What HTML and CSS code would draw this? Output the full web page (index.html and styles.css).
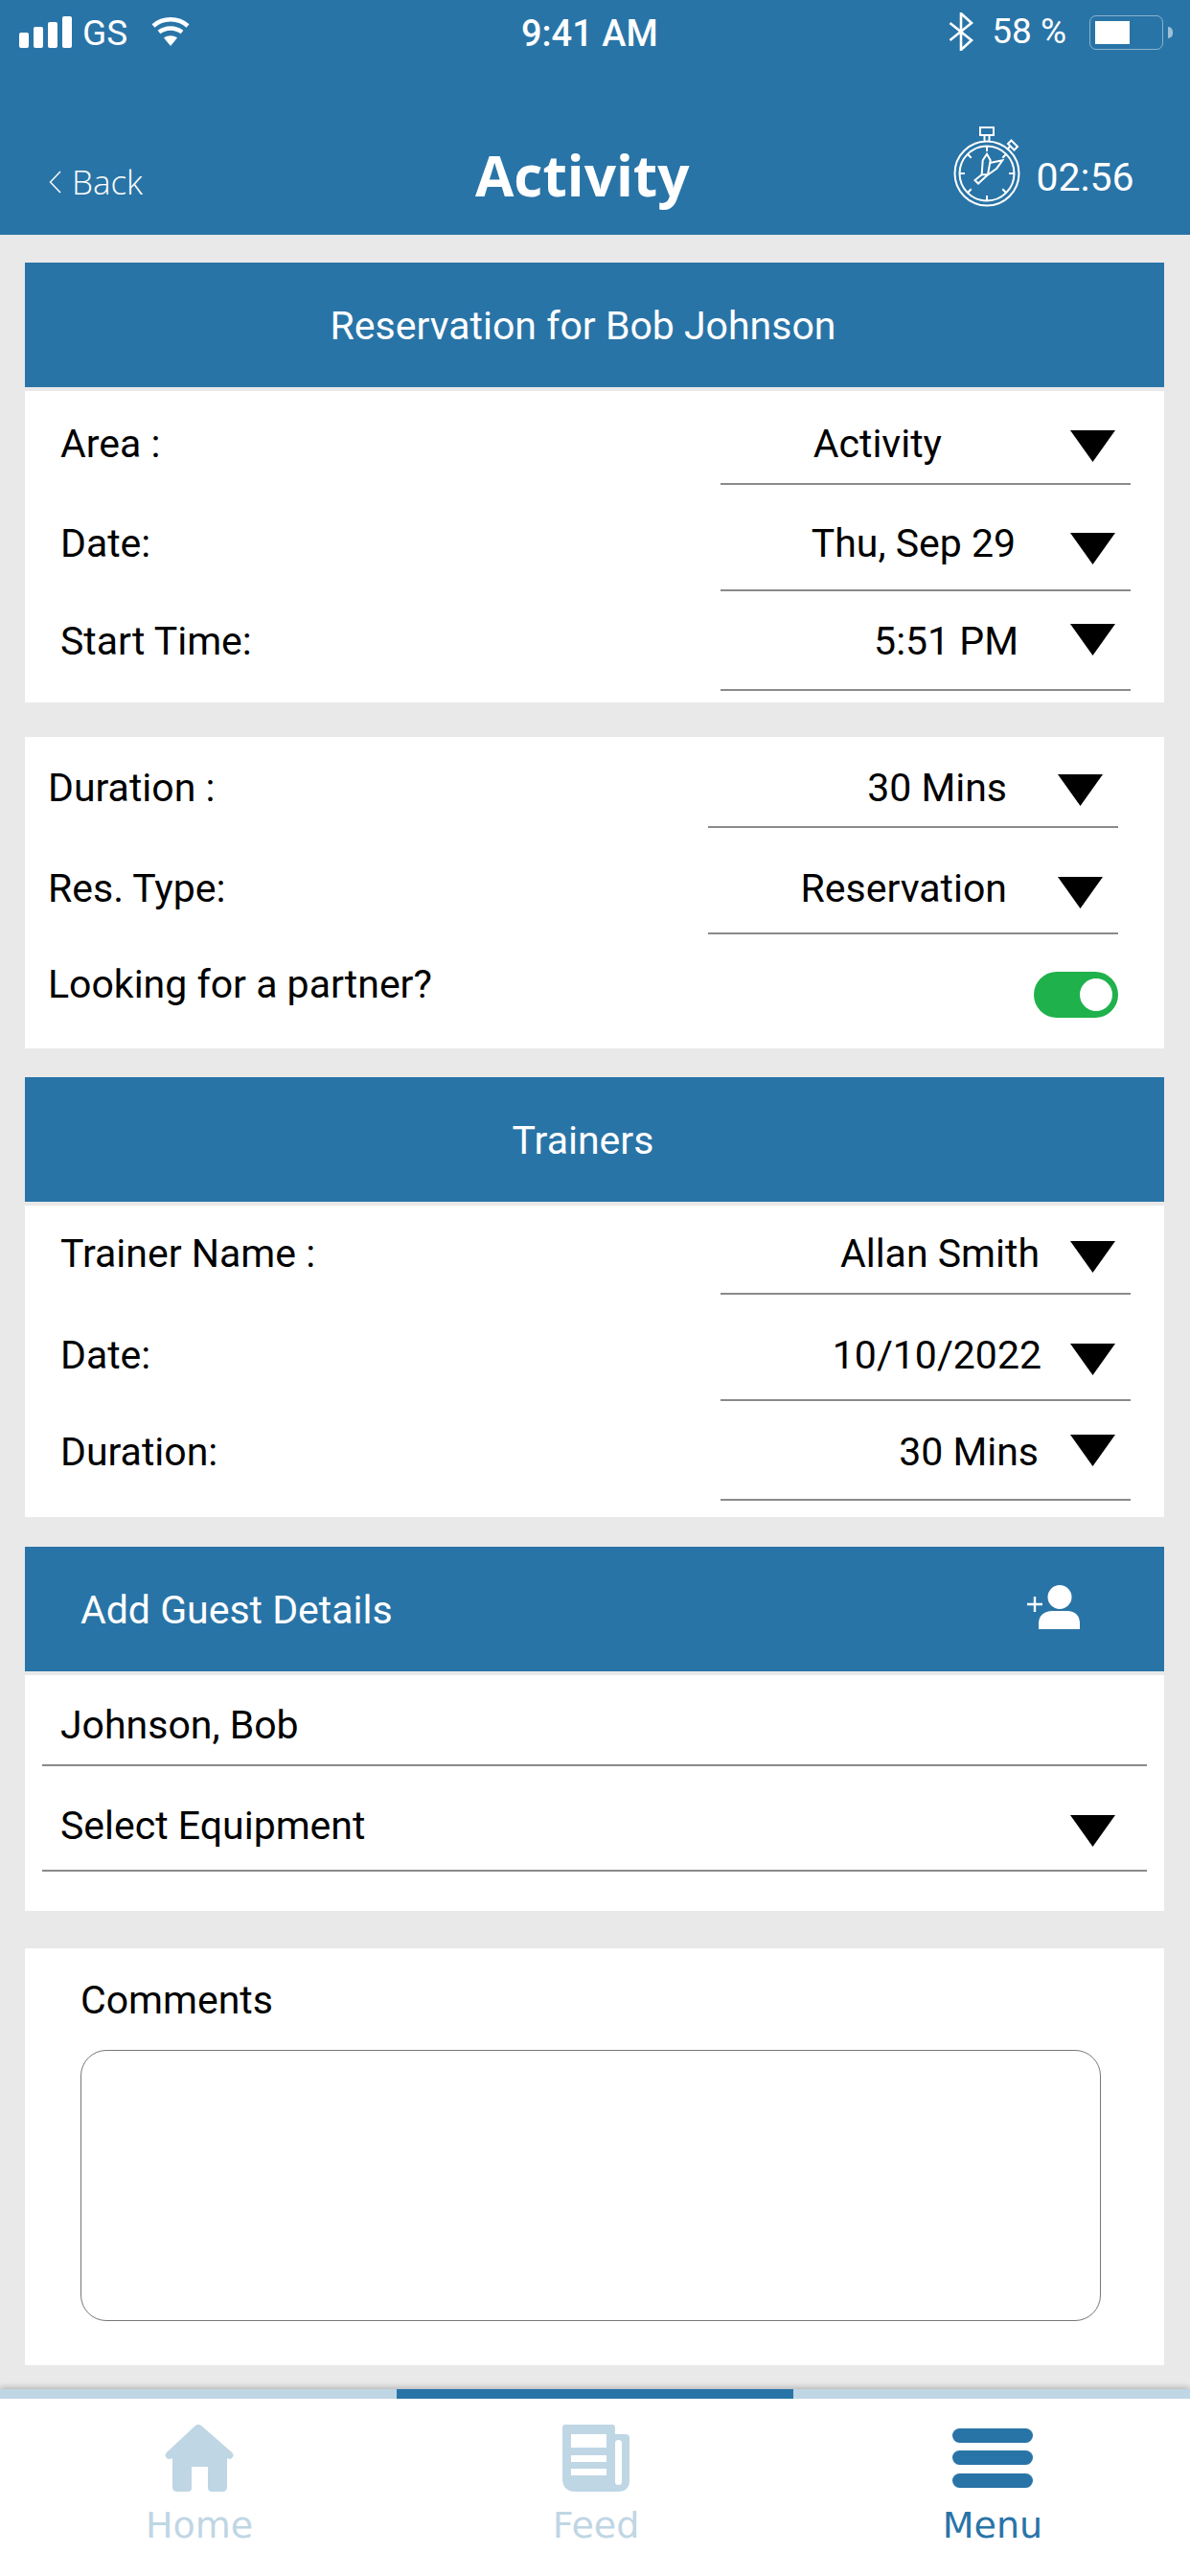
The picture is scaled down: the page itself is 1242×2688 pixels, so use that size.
FILE: index.html
```html
<!DOCTYPE html>
<html lang="en">
<head>
<meta charset="utf-8">
<title>Activity</title>
<link rel="stylesheet" href="styles.css">
</head>
<body>
<header class="top">
  <div class="status">
    <div class="status-left">
      <svg class="signal" width="55" height="33" viewBox="0 0 55 33"><rect x="0" y="17" width="10" height="16" rx="2"/><rect x="15" y="11" width="10" height="22" rx="2"/><rect x="30" y="6" width="10" height="27" rx="2"/><rect x="45" y="0" width="10" height="33" rx="2"/></svg>
      <span class="carrier">GS</span>
      <svg class="wifi" width="40" height="30" viewBox="0 0 40 30"><path d="M2 9C12 0 28 0 38 9M8 15.500C15 10 25 10 32 15.500" fill="none" stroke="#fff" stroke-width="4.500"/><path d="M13 21.500C17 18.500 23 18.500 27 21.500L20 30Z" fill="#fff"/></svg>
    </div>
    <div class="clock">9:41 AM</div>
    <div class="status-right">
      <svg class="bt" width="26" height="40" viewBox="0 0 26 40"><path d="M1.500 11L24 29 13 39V1L24 11 1.500 29" fill="none" stroke="#fff" stroke-width="2.600"/></svg>
      <span class="battery-pct">58 %</span>
      <div class="battery"><div class="battery-fill"></div></div>
      <div class="battery-nub"></div>
    </div>
  </div>
  <div class="nav">
    <div class="back">
      <svg width="13" height="24" viewBox="0 0 13 24"><path d="M12 1L1.500 12 12 23" fill="none" stroke="#fff" stroke-width="1.400"/></svg>
      <span>Back</span>
    </div>
    <h1 class="title">Activity</h1>
    <div class="timer">
      <svg width="76" height="90" viewBox="0 0 76 90" fill="none" stroke="#fff" stroke-width="2">
        <rect x="31" y="4" width="14" height="8"/>
        <path d="M35.500 12V18.500M40.500 12V18.500"/>
        <circle cx="38" cy="52" r="33.500"/>
        <circle cx="38" cy="52" r="28.500"/>
        <path d="M38 23.500V29M38 75V80.500M9.500 52H15M61 52H66.500M17.800 31.800L21.700 35.700M58.200 31.800L54.300 35.700M17.800 72.200L21.700 68.300M58.200 72.200L54.300 68.300"/>
        <path d="M59 27L63 23M63.500 17.500L70 24 66.500 27.500 60 21Z"/>
        <path d="M38 31.700L41.700 38.300 39 53.300H32.700L33.700 38.300Z"/>
        <path d="M41 41L54.300 38.300 48.300 46.700 39.300 53.300"/>
        <path d="M33 53L25.500 59 29 62.500 39 53.300"/>
      </svg>
      <span>02:56</span>
    </div>
  </div>
</header>

<main class="page">
  <section class="bar bar-center first-bar">Reservation for Bob Johnson</section>
  <section class="body body-wide">
    <div class="row h98 p30"><span>Area :</span><div class="select"><span class="val g134">Activity</span><i class="tri t11"></i></div></div>
    <div class="row h111 p36"><span>Date:</span><div class="select"><span class="val g57">Thu, Sep 29</span><i class="tri t14"></i></div></div>
    <div class="row h104 p27"><span>Start Time:</span><div class="select"><span class="val g54">5:51 PM</span><i class="tri t7"></i></div></div>
  </section>

  <section class="body body-narrow gap36">
    <div class="row h95 p28"><span>Duration :</span><div class="select"><span class="val g53">30 Mins</span><i class="tri t11"></i></div></div>
    <div class="row h111 p38"><span>Res. Type:</span><div class="select"><span class="val g53">Reservation</span><i class="tri t13"></i></div></div>
    <div class="row h119 p27"><span>Looking for a partner?</span><div class="toggle"><i class="knob"></i></div></div>
  </section>

  <section class="bar bar-center gap30">Trainers</section>
  <section class="body body-trainers">
    <div class="row h93 p25"><span>Trainer Name :</span><div class="select"><span class="val g32">Allan Smith</span><i class="tri t12"></i></div></div>
    <div class="row h111 p38"><span>Date:</span><div class="select"><span class="val g30">10/10/2022</span><i class="tri t13"></i></div></div>
    <div class="row h104 p28"><span>Duration:</span><div class="select"><span class="val g33">30 Mins</span><i class="tri t7"></i></div></div>
  </section>

  <section class="bar bar-guest gap31">
    <span>Add Guest Details</span>
    <svg width="56" height="46" viewBox="0 0 56 46"><path d="M0 20H16M8 12V28" stroke="#fff" stroke-width="2.400"/><circle cx="34" cy="12.500" r="12.500" fill="#fff"/><path d="M12 46V40C12 32 18 27 26 27H42C50 27 55 32 55 40V46Z" fill="#fff"/></svg>
  </section>
  <section class="body body-guest">
    <div class="row h95 p27"><div class="select select-full"><span class="val">Johnson, Bob</span></div></div>
    <div class="row h110 p37"><div class="select select-full"><span class="val val-grow">Select Equipment</span><i class="tri t14"></i></div></div>
  </section>

  <section class="comments">
    <div class="comments-label">Comments</div>
    <div class="comments-box"></div>
  </section>
</main>

<nav class="tabbar">
  <div class="stripe"><i></i><i class="on"></i><i></i></div>
  <div class="tabs">
    <div class="tab">
      <svg width="74" height="72" viewBox="0 0 74 72"><path d="M33 2Q36 0 39 2L71 30Q74 33 71 36Q69 38 66 36V66Q66 71 61 71H50Q46 71 46 67V45H29V67Q29 71 25 71H14Q9 71 9 66V36Q6 38 3 36Q0 33 3 30Z"/></svg>
      <span>Home</span>
    </div>
    <div class="tab">
      <svg width="70" height="72" viewBox="0 0 70 72"><path fill-rule="evenodd" d="M3 1H52Q55 1 55 4V11H66Q70 11 70 15V59Q70 71 58 71H14Q0 71 0 57V4Q0 1 3 1ZM9 11V25H46V11ZM9 33V40H46V33ZM9 47V54H46V47Z"/><rect class="slit" x="55" y="17" width="7" height="47" rx="3.500"/></svg>
      <span>Feed</span>
    </div>
    <div class="tab tab-on">
      <svg width="84" height="72" viewBox="0 0 84 72"><rect x="0" y="5" width="84" height="15" rx="7.500"/><rect x="0" y="28" width="84" height="15" rx="7.500"/><rect x="0" y="52" width="84" height="15" rx="7.500"/></svg>
      <span>Menu</span>
    </div>
  </div>
</nav>
</body>
</html>
```

FILE: styles.css
```css
* { box-sizing: border-box; }
html, body { margin: 0; padding: 0; }
body {
  width: 1242px;
  height: 2688px;
  overflow: hidden;
  display: flex;
  flex-direction: column;
  background: #e9e9e9;
  color: #000;
  font-family: Roboto, "Liberation Sans", sans-serif;
  font-size: 41px;
  line-height: 50px;
}

/* header */
.top { height: 245px; background: #2974a7; color: #fff; flex: none; }
.status {
  height: 124px;
  display: grid;
  grid-template-columns: 544px auto 1fr;
  font-size: 37px;
  line-height: 42px;
}
.status-left { display: flex; align-items: flex-start; padding: 17px 0 0 20px; }
.signal { fill: #fff; flex: none; }
.carrier { margin: -3px 0 0 11px; }
.wifi { margin: 1px 0 0 25px; }
.clock { padding-top: 14px; font-size: 38px; font-weight: 500; }
.status-right { display: flex; align-items: flex-start; justify-content: flex-end; padding: 13px 18px 0 0; }
.battery-pct { margin: -1px 0 0 19px; }
.battery {
  width: 77px; height: 36px; margin: 3px 0 0 24px; padding: 5px;
  border: 1px solid rgba(255,255,255,.45); border-radius: 7px;
}
.battery-fill { width: 36px; height: 24px; background: #fff; }
.battery-nub {
  width: 5px; height: 12px; margin: 15px 0 0 5px;
  background: rgba(255,255,255,.55); border-radius: 0 6px 6px 0;
}

.nav {
  height: 121px;
  display: grid;
  grid-template-columns: 496px auto 1fr;
  align-items: start;
}
.back {
  display: flex; align-items: center; padding: 42px 0 0 51px;
  font-family: "Open Sans", sans-serif; font-size: 35px; font-weight: 300; line-height: 48px;
}
.back span { margin-left: 11px; }
.title {
  margin: 0; padding-top: 19px;
  font-family: "Open Sans", sans-serif; font-size: 58.500px; font-weight: 700; line-height: 78px;
}
.timer { display: flex; align-items: flex-start; justify-content: flex-start; padding: 5px 0 0 272px; white-space: nowrap; }
.timer svg { flex: none; }
.timer span { margin: 31px 0 0 14px; }

/* content */
.page { flex: 1; min-height: 0; padding: 29px 27px 0 26px; }
.bar {
  height: 130px; padding-top: 2px; background: #2974a7; color: #fff;
  display: flex; align-items: center;
}
.bar-center { justify-content: center; padding-right: 24px; }
.bar-guest { justify-content: space-between; padding: 2px 87px 0 58px; }
.bar-guest svg { margin-top: -6px; }

.body { background: #fff; }
.body-wide { margin-top: 4px; padding: 0 35px 12px 37px; }
.body-narrow { padding: 0 48px 0 24px; }
.body-trainers { margin-top: 4px; padding: 0 35px 17px 37px; }
.body-guest { margin-top: 4px; padding: 0 18px 41px; }

.gap36 { margin-top: 36px; }
.gap30 { margin-top: 30px; }
.gap31 { margin-top: 31px; }

.row { display: flex; justify-content: space-between; }
.h93 { height: 93px; } .h95 { height: 95px; } .h98 { height: 98px; }
.h104 { height: 104px; } .h110 { height: 110px; } .h111 { height: 111px; } .h119 { height: 119px; }
.p25 { padding-top: 25px; } .p27 { padding-top: 27px; } .p28 { padding-top: 28px; } .p30 { padding-top: 30px; }
.p36 { padding-top: 36px; } .p37 { padding-top: 37px; } .p38 { padding-top: 38px; }

.select {
  flex: none; width: 428px;
  display: flex; justify-content: flex-end; align-items: flex-start;
  padding-right: 16px;
  border-bottom: 2px solid #8a8a8a;
}
.select-full { width: 100%; padding: 0 33px 0 19px; justify-content: flex-start; }
.val-grow { flex: 1; }
.g134 { margin-right: 134px; } .g57 { margin-right: 57px; } .g54 { margin-right: 54px; }
.g53 { margin-right: 53px; } .g32 { margin-right: 32px; } .g30 { margin-right: 30px; } .g33 { margin-right: 33px; }

.tri {
  flex: none; width: 47px; height: 33px; background: #000;
  clip-path: polygon(0 0, 100% 0, 50% 100%);
}
.t7 { margin-top: 7px; } .t11 { margin-top: 11px; } .t12 { margin-top: 12px; } .t13 { margin-top: 13px; } .t14 { margin-top: 14px; }

.toggle {
  flex: none; width: 88px; height: 48px; margin-top: 12px; padding-right: 6px;
  background: #1fb14c; border-radius: 24px;
  display: flex; align-items: center; justify-content: flex-end;
}
.knob { width: 34px; height: 34px; background: #fff; border-radius: 50%; }

.comments { margin-top: 39px; padding: 29px 66px 46px 58px; background: #fff; }
.comments-box { height: 283px; margin-top: 27px; border: 1px solid #777; border-radius: 27px; }

/* tab bar */
.tabbar { flex: none; height: 195px; background: #fff; box-shadow: 0 -2px 6px rgba(0,0,0,.22); }
.stripe { height: 10px; display: grid; grid-template-columns: 414px 414px 414px; background: #bfd6e4; }
.stripe .on { background: #2974a7; }
.tabs { display: grid; grid-template-columns: repeat(3, 414px); padding: 26px 0 0 1px; }
.tab {
  display: flex; flex-direction: column; align-items: center;
  font-family: "DejaVu Sans", sans-serif; font-size: 38px; line-height: 44px;
  color: #bfd6e4;
}
.tab svg { fill: #bfd6e4; }
.tab .slit { fill: #fff; }
.tab span { margin-top: 12px; }
.tab-on { color: #2974a7; }
.tab-on svg { fill: #2974a7; }
```
